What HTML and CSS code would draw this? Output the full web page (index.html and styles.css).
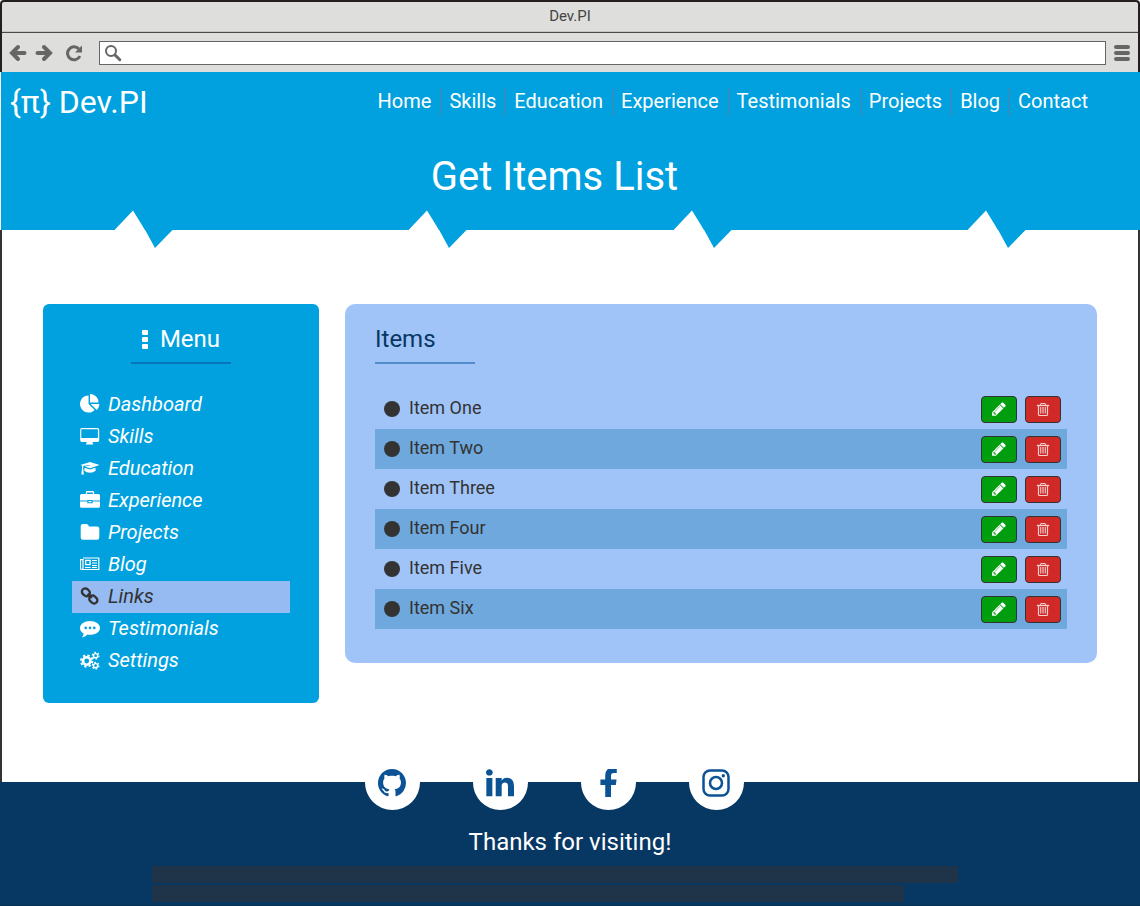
FILE: index.html
```html
<!DOCTYPE html>
<html lang="en">
<head>
<meta charset="utf-8">
<meta name="viewport" content="width=device-width, initial-scale=1">
<title>Dev.PI</title>
<link rel="stylesheet" href="styles.css">
</head>
<body>
<svg class="sprite" aria-hidden="true">
  <symbol id="pencil" viewBox="0 0 1792 1792"><path d="M491 1536l91-91-235-235-91 91v107h128v128h107zm523-928q0-22-22-22-10 0-17 7l-542 542q-7 7-7 17 0 22 22 22 10 0 17-7l542-542q7-7 7-17zm-54-192l416 416-832 832h-416v-416zm683 96q0 53-37 90l-166 166-416-416 166-165q36-38 90-38 53 0 91 38l235 234q37 39 37 91z"/></symbol>
  <symbol id="trash" viewBox="0 0 14 15"><g fill="none" stroke="currentColor"><path d="M.8 3.500h12.400" stroke-width="1.300"/><path d="M4.200 3.300Q4.600 1.500 5.600 1.500h2.800q1 0 1.400 1.800M2.500 3.500v8.900q0 1.100 1.100 1.100h6.800q1.100 0 1.100-1.100V3.500" stroke-width="1.200"/><path d="M4.500 5v6.500M6.200 5v6.500M7.800 5v6.500M9.500 5v6.500" opacity=".8"/></g></symbol>
  <symbol id="pie" viewBox="0 0 1792 1792"><path d="M768 890l546 546q-106 108-247.500 168t-298.500 60q-209 0-385.500-103t-279.500-279.500-103-385.500 103-385.500 279.500-279.500 385.500-103v762zm187 6h773q0 157-60 298.500t-168 247.500zm709-128h-768v-768q209 0 385.500 103t279.500 279.500 103 385.500z"/></symbol>
  <symbol id="desktop" viewBox="0 0 20 20"><path fill-rule="evenodd" d="M1.700 2h15.800Q19.200 2 19.200 3.700v10.600q0 1.700-1.700 1.700h-5v.8q0 .7.7 1v.8H6v-.8q.7-.3.7-1V16h-5Q.2 16 .2 14.300V3.700Q.2 2 1.700 2zM1.300 3.300v8.800h16.600V3.300z"/></symbol>
  <symbol id="cap" viewBox="0 0 20 20"><path d="M10 4l9.600 3.100L10 10.300 4.700 8.500l5.200-.9-.1-.7-7 1.200L.4 7.100z"/><path d="M4.600 9.700l5.400 1.700 5.400-1.700.3 3q-2.200 2.100-5.700 2.100t-5.700-2.100z"/><path d="M2 7.600l1.200.4v3.600q.6.500.2 1.100l.5 3.900H1.300l.5-3.900q-.5-.6.200-1.100z"/></symbol>
  <symbol id="briefcase" viewBox="0 0 20 20"><path fill-rule="evenodd" d="M7.200 1h5.600q1.400 0 1.400 1.400V4h4.200Q20 4 20 5.600v4.800h-7.500V10H7.500v.4H0V5.600Q0 4 1.600 4h4.200V2.400Q5.800 1 7.200 1zM7.100 2.400V4h5.800V2.400z"/><path d="M0 11.400h7.300v1.800h5.400v-1.800H20v4.900q0 1.500-1.600 1.500H1.600Q0 17.800 0 16.300zM8.500 11h3v1.200h-3z"/></symbol>
  <symbol id="folder" viewBox="0 0 20 20"><path d="M.7 4.300q0-2.300 2.300-2.300h3.500q2.300 0 2.300 2.500H17q2.300 0 2.300 2.300v8.700q0 2.300-2.300 2.300H3q-2.300 0-2.300-2.300z"/></symbol>
  <symbol id="news" viewBox="0 0 20 20"><g fill="none" stroke="currentColor"><path d="M3 4h15.800v11.500H1.700Q.5 15.500.5 14V5.700H3V14q0 1.500-1.300 1.500" stroke-width="1.200"/><path d="M5.700 6.400h4.400v4.200H5.700z" stroke-width="1.300"/><path d="M12 6.500h5M12 9h5M12 11.500h5M5 13.500h5.600M12 13.500h5"/></g></symbol>
  <symbol id="link" viewBox="0 0 20 20"><g fill="none" stroke="currentColor" stroke-width="2.300"><rect x="1.700" y="3" width="8.400" height="6.600" rx="3.200" transform="rotate(42 5.900 6.300)"/><rect x="9" y="10.200" width="8.600" height="6.600" rx="3.200" transform="rotate(42 13.300 13.500)"/><path d="M7.600 7.900l4.300 3.900"/></g></symbol>
  <symbol id="comment" viewBox="0 0 20 20"><path fill-rule="evenodd" d="M10 3c5.500 0 10 3 10 6.900s-4.500 6.900-10 6.900q-1.200 0-2.400-.2Q5.200 18.900 1.700 19.500q1.800-1.700 1.900-4C1.300 14.200 0 12.200 0 9.900 0 6 4.500 3 10 3zM5.700 8.600a1.300 1.300 0 100 2.600 1.300 1.300 0 000-2.600zm4.300 0a1.300 1.300 0 100 2.600 1.300 1.300 0 000-2.600zm4.300 0a1.300 1.300 0 100 2.600 1.300 1.300 0 000-2.600z"/></symbol>
  <symbol id="gears" viewBox="0 0 20 20"><g fill="none" stroke="currentColor"><circle cx="6.700" cy="11" r="3.700" stroke-width="2.600"/><circle cx="6.700" cy="11" r="5.700" stroke-width="1.900" stroke-dasharray="2.300 2.176"/><circle cx="15.600" cy="5.700" r="2.100" stroke-width="1.400"/><circle cx="15.600" cy="5.700" r="3.300" stroke-width="1.200" stroke-dasharray="1.700 1.755"/><circle cx="15.600" cy="15.700" r="2.100" stroke-width="1.400"/><circle cx="15.600" cy="15.700" r="3.300" stroke-width="1.200" stroke-dasharray="1.700 1.755"/></g></symbol>
  <symbol id="spike" viewBox="0 0 58 38"><path fill="#fff" d="M0 20v-.5L18 .5 30 20v2H0z"/><path fill="#00a1de" d="M28 16l12 22 18-18.500V16z"/></symbol>
</svg>

<div class="chrome">
  <div class="titlebar">Dev.PI</div>
  <div class="toolbar">
    <button class="tool" aria-label="Back"><svg viewBox="0 0 18 18"><path d="M15.500 9H4M9 3L3 9l6 6" fill="none" stroke="currentColor" stroke-width="4" stroke-linecap="round"/></svg></button>
    <button class="tool" aria-label="Forward"><svg viewBox="0 0 18 18"><path d="M2.500 9H14M9 3l6 6-6 6" fill="none" stroke="currentColor" stroke-width="4" stroke-linecap="round"/></svg></button>
    <button class="tool reload" aria-label="Reload"><svg viewBox="0 0 18 18"><path d="M13.800 4.900A6.500 6.500 0 1014.900 12.200" fill="none" stroke="currentColor" stroke-width="3"/><path d="M17 1.600v6.800h-7z"/></svg></button>
    <label class="address">
      <svg viewBox="0 0 18 18"><circle cx="7" cy="7" r="5" fill="none" stroke="currentColor" stroke-width="2"/><path d="M11 11l4.800 4.700" stroke="currentColor" stroke-width="3" stroke-linecap="round"/></svg>
      <input type="text" aria-label="Address">
    </label>
    <button class="tool more" aria-label="Browser menu"><svg viewBox="0 0 18 18"><path d="M3 3h12M3 9h12M3 15h12" stroke="currentColor" stroke-width="4" stroke-linecap="round"/></svg></button>
  </div>
</div>

<header class="hero">
  <div class="topbar">
    <a class="brand" href="#">{π} Dev.PI</a>
    <nav class="nav" aria-label="Main">
      <a href="#">Home</a><a href="#">Skills</a><a href="#">Education</a><a href="#">Experience</a><a href="#">Testimonials</a><a href="#">Projects</a><a href="#">Blog</a><a href="#">Contact</a>
    </nav>
  </div>
  <h1>Get Items List</h1>
  <div class="spikes" aria-hidden="true">
    <div class="pair"><svg><use href="#spike"/></svg><svg><use href="#spike"/></svg></div>
    <div class="pair"><svg><use href="#spike"/></svg><svg><use href="#spike"/></svg></div>
  </div>
</header>

<main class="content">
  <aside class="menu">
    <h2><svg viewBox="0 0 6 20"><rect y="1" width="6" height="5" rx="1"/><rect y="8" width="6" height="5" rx="1"/><rect y="15" width="6" height="5" rx="1"/></svg>Menu</h2>
    <nav aria-label="Sections">
      <a href="#"><svg><use href="#pie"/></svg>Dashboard</a>
      <a href="#"><svg><use href="#desktop"/></svg>Skills</a>
      <a href="#"><svg><use href="#cap"/></svg>Education</a>
      <a href="#"><svg><use href="#briefcase"/></svg>Experience</a>
      <a href="#"><svg><use href="#folder"/></svg>Projects</a>
      <a href="#"><svg><use href="#news"/></svg>Blog</a>
      <a href="#" class="current" aria-current="page"><svg><use href="#link"/></svg>Links</a>
      <a href="#"><svg><use href="#comment"/></svg>Testimonials</a>
      <a href="#"><svg><use href="#gears"/></svg>Settings</a>
    </nav>
  </aside>
  <section class="items">
    <h2>Items</h2>
    <ul>
      <li><span>Item One</span><button class="edit" aria-label="Edit Item One"><svg><use href="#pencil"/></svg></button><button class="delete" aria-label="Delete Item One"><svg><use href="#trash"/></svg></button></li>
      <li><span>Item Two</span><button class="edit" aria-label="Edit Item Two"><svg><use href="#pencil"/></svg></button><button class="delete" aria-label="Delete Item Two"><svg><use href="#trash"/></svg></button></li>
      <li><span>Item Three</span><button class="edit" aria-label="Edit Item Three"><svg><use href="#pencil"/></svg></button><button class="delete" aria-label="Delete Item Three"><svg><use href="#trash"/></svg></button></li>
      <li><span>Item Four</span><button class="edit" aria-label="Edit Item Four"><svg><use href="#pencil"/></svg></button><button class="delete" aria-label="Delete Item Four"><svg><use href="#trash"/></svg></button></li>
      <li><span>Item Five</span><button class="edit" aria-label="Edit Item Five"><svg><use href="#pencil"/></svg></button><button class="delete" aria-label="Delete Item Five"><svg><use href="#trash"/></svg></button></li>
      <li><span>Item Six</span><button class="edit" aria-label="Edit Item Six"><svg><use href="#pencil"/></svg></button><button class="delete" aria-label="Delete Item Six"><svg><use href="#trash"/></svg></button></li>
    </ul>
  </section>
</main>

<footer class="footer">
  <div class="social">
    <a href="#" aria-label="GitHub"><svg viewBox="0 0 16 16"><path d="M8 0C3.580 0 0 3.580 0 8c0 3.540 2.290 6.530 5.470 7.590.4.070.55-.17.55-.38 0-.19-.01-.82-.01-1.490-2.010.37-2.530-.49-2.690-.94-.09-.23-.48-.94-.82-1.130-.28-.15-.68-.52-.01-.53.63-.01 1.080.58 1.230.82.72 1.210 1.870.87 2.330.66.07-.52.28-.87.51-1.070-1.780-.2-3.640-.89-3.640-3.950 0-.87.31-1.590.82-2.150-.08-.2-.36-1.020.08-2.120 0 0 .67-.21 2.200.82.64-.18 1.320-.27 2-.27s1.360.09 2 .27c1.530-1.040 2.200-.82 2.200-.82.44 1.100.16 1.920.08 2.120.51.56.82 1.270.82 2.150 0 3.070-1.870 3.750-3.650 3.950.29.25.54.73.54 1.480 0 1.070-.01 1.930-.01 2.200 0 .21.15.46.55.38A8.013 8.013 0 0016 8c0-4.420-3.580-8-8-8z"/></svg></a>
    <a href="#" aria-label="LinkedIn"><svg viewBox="128 128 1536 1536"><path d="M477 625v991h-330v-991h330zm21-306q1 73-50.500 122t-135.500 49h-2q-82 0-132-49t-50-122q0-74 51.500-122.500t134.500-48.500 133 48.500 51 122.500zm1166 729v568h-329v-530q0-105-40.500-164.500t-126.500-59.500q-63 0-105.500 34.500t-63.500 85.500q-11 30-11 81v553h-329q2-399 2-647t-1-296l-1-48h329v144h-2q20-32 41-56t56.500-52 87-43.500 114.500-15.500q171 0 275 113.500t104 332.500z"/></svg></a>
    <a href="#" aria-label="Facebook"><svg viewBox="140 60 1480 1480"><path d="M1343 12v264h-157q-86 0-116 36t-30 108v189h293l-39 296h-254v675h-306v-675h-255v-296h255v-218q0-186 104-288.500t277-102.500q147 0 228 12z"/></svg></a>
    <a href="#" aria-label="Instagram"><svg viewBox="0 0 28 28"><g fill="none" stroke="currentColor" stroke-width="2.500"><rect x="1.500" y="1.500" width="25" height="25" rx="6.500"/><circle cx="14" cy="14" r="6"/></g><circle cx="21.300" cy="6.800" r="1.700"/></svg></a>
  </div>
  <p>Thanks for visiting!</p>
  <div class="notes"><div class="note"></div><div class="note short"></div></div>
</footer>
</body>
</html>
```
FILE: styles.css
```css
* { box-sizing: border-box; }
body {
  margin: 0;
  min-height: 100vh;
  display: flex;
  flex-direction: column;
  background: #fff;
  font-family: Roboto, "Liberation Sans", sans-serif;
  color: #333;
}
h1, h2, p, ul { margin: 0; padding: 0; font-weight: 400; }
a { color: inherit; text-decoration: none; }
button { padding: 0; font: inherit; cursor: pointer; }
svg { display: block; fill: currentColor; }
.sprite { position: absolute; width: 0; height: 0; }

.chrome {
  border: 2px solid #231f20;
  border-bottom: 0;
  border-radius: 4px 4px 0 0;
  background: #dededc;
}
.titlebar {
  height: 31px;
  border-bottom: 1px solid #4a4a4a;
  box-shadow: inset 0 -1px #c5c5c3;
  font-size: 15px;
  line-height: 28px;
  text-align: center;
  color: #444;
}
.toolbar {
  height: 39px;
  display: flex;
  align-items: center;
  padding: 1px 7px 0;
  color: #666;
}
.tool {
  border: 0;
  background: none;
  color: inherit;
  margin-right: 8px;
}
.tool svg { width: 18px; height: 18px; }
.tool.reload { margin: 0 16px 0 4px; }
.tool.more { margin: 0 0 0 7px; }
.address {
  flex: 1;
  height: 24px;
  display: flex;
  align-items: center;
  gap: 4px;
  padding-left: 4px;
  border: 1px solid #666;
  background: #fff;
}
.address svg { width: 18px; height: 18px; }
.address input {
  flex: 1;
  min-width: 0;
  border: 0;
  outline: 0;
  background: transparent;
  font: inherit;
}

.hero {
  position: relative;
  margin-left: 1px;
  padding-bottom: 27px;
  background: #00a1de;
  color: #fff;
}
.topbar {
  display: flex;
  justify-content: space-between;
  align-items: center;
  padding: 0 52px 0 9px;
  height: 60px;
}
.brand { font-size: 32px; line-height: 60px; }
.nav { display: flex; }
.nav a {
  padding: 0 9px 2px 8px;
  font-size: 20px;
  line-height: 26px;
}
.nav a + a { border-left: 1px solid #5480b0; }
.nav a:last-child { padding-right: 0; }
.hero h1 {
  padding: 18px 32px 0 0;
  font-size: 40px;
  line-height: 53px;
  text-align: center;
}
.spikes {
  position: absolute;
  left: 0;
  right: 0;
  bottom: -18px;
  display: flex;
  justify-content: space-between;
  padding: 0 114px;
}
.pair { display: flex; gap: 236px; }
.spikes svg { width: 58px; height: 38px; }

.content {
  flex: 1;
  display: grid;
  grid-template-columns: 276px minmax(0, 1fr);
  align-items: start;
  gap: 26px;
  padding: 74px 41px 79px;
  border: solid #333;
  border-width: 0 2px;
}
h2 { font-size: 24px; line-height: 32px; }
h2::after {
  content: "";
  display: block;
  width: 100px;
  height: 2px;
}
.menu {
  padding: 19px 29px 26px;
  border-radius: 6px;
  background: #00a1de;
  color: #fff;
}
.menu h2 {
  display: flex;
  flex-wrap: wrap;
  justify-content: center;
  align-items: center;
  column-gap: 12px;
  margin-bottom: 25px;
}
.menu h2::after { margin: 7px 50px 0; background: #0775b9; }
.menu h2 svg { width: 6px; height: 20px; }
.menu a {
  display: flex;
  align-items: center;
  gap: 8px;
  padding: 0 0 2px 8px;
  font-size: 20px;
  font-style: italic;
  line-height: 30px;
}
.menu a svg { width: 20px; height: 20px; }
.menu a.current { background: #95bbf2; color: #333; }

.items {
  padding: 19px 30px 34px;
  border-radius: 10px;
  background: #a0c4f8;
}
.items h2 { margin-bottom: 25px; color: #073763; }
.items h2::after { margin-top: 7px; background: #518ccb; }
.items ul { list-style: none; }
.items li {
  display: flex;
  align-items: center;
  gap: 8px;
  height: 40px;
  padding: 0 6px 0 9px;
  font-size: 18px;
}
.items li:nth-child(even) { background: #6fa8dc; }
.items li::before {
  content: "";
  width: 16px;
  height: 16px;
  border-radius: 50%;
  background: #333;
}
.items span { flex: 1; line-height: 24px; padding: 0 0 2px 1px; }
.items button {
  display: grid;
  place-items: center;
  width: 36px;
  height: 27px;
  border: 1px solid #333;
  border-radius: 4px;
  color: #fff;
}
.items .edit { background: #009e0f; }
.items .edit svg { width: 16px; height: 16px; }
.items .delete { background: #cf2a27; color: #f7cfce; }
.items .delete svg { width: 14px; height: 15px; }

.footer {
  padding-bottom: 3px;
  border-bottom: 1px solid #062f57;
  background: #073763;
  color: #fff;
}
.social {
  display: flex;
  justify-content: center;
  gap: 53px;
  margin-top: -27px;
  padding-right: 31px;
}
.social a {
  display: grid;
  place-items: center;
  width: 55px;
  height: 55px;
  padding-right: 2px;
  border-radius: 50%;
  background: #fff;
  color: #0b5394;
}
.social svg { width: 28px; height: 28px; }
.footer p {
  margin: 16px 0 8px;
  font-size: 24px;
  line-height: 32px;
  text-align: center;
}
.notes {
  display: grid;
  gap: 2px;
  width: 806px;
  max-width: 80%;
  margin-left: 152px;
}
.note { height: 17px; background: #1f3448; }
.note.short { width: 752px; max-width: 100%; }
```
